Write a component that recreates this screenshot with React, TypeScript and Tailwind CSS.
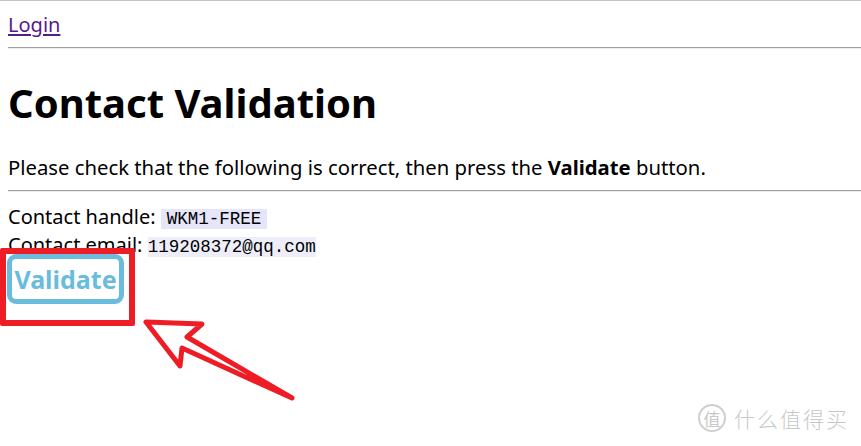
export default function App() {
  return (
    <div className="relative min-h-[446px] bg-white text-black border-t border-[#c4c4c4]" style={{ fontFamily: '"Noto Sans", "Open Sans", sans-serif' }}>
      <div className="px-2">
        <div className="pt-[10px] text-[20px] leading-[28px]">
          <a href="#" className="text-[#551a8b] underline underline-offset-2">Login</a>
        </div>
        <hr className="mt-[8px] border-t border-b border-t-[#a0a0a0] border-b-[#ececec] mr-[-8px]" />

        <h1 className="mt-[30px] text-[40px] font-bold leading-[48px]">Contact Validation</h1>

        <p className="mt-[26px] text-[20.3px] leading-[28px]">
          Please check that the following is correct, then press the <b>Validate</b> button.
        </p>
        <hr className="mt-[9px] border-t border-b border-t-[#a0a0a0] border-b-[#ececec] mr-[-8px]" />

        <div className="mt-[12px] text-[20px] leading-[25px]">
          <div>
            Contact handle:{' '}
            <span className="bg-[#e6e6fa] px-[6px] text-[17.5px]" style={{ fontFamily: '"Liberation Mono", monospace' }}>WKM1-FREE</span>
          </div>
          <div>
            Contact email:{' '}
            <span className="bg-[#eeeefa] text-[17.5px]" style={{ fontFamily: '"Liberation Mono", monospace' }}>119208372@qq.com</span>
          </div>
        </div>

        <button className="block mt-[-6px] -ml-px h-[50px] w-[117px] rounded-[9px] border-[5px] border-[#6abcdd] bg-white text-[25px] font-bold text-[#6abcdd] leading-none">
          Validate
        </button>
      </div>

      {/* annotation overlay */}
      <div className="absolute left-0 top-[247px] h-[78px] w-[135px] rounded-[2px] border-[6px] border-[#ee1c25]" />
      <svg className="absolute left-0 top-0" width="861" height="446" viewBox="0 0 861 446" fill="none">
        <path
          d="M146 321 L202 323 L187 336 L292 397 L182 347 L180 365 Z"
          stroke="#ee1c25"
          strokeWidth="5"
          strokeLinejoin="round"
          strokeLinecap="round"
        />
      </svg>

      {/* watermark */}
      <div className="absolute right-[12px] bottom-[12px] flex items-center gap-[8px] text-[#c8c8c8] text-[21px]" style={{ fontFamily: '"Noto Sans CJK SC", sans-serif' }}>
        <span className="flex h-[28px] w-[28px] items-center justify-center rounded-full border-2 border-[#cfcfcf] text-[17px]">值</span>
        <span className="tracking-[2px] font-light">什么值得买</span>
      </div>
    </div>
  );
}
